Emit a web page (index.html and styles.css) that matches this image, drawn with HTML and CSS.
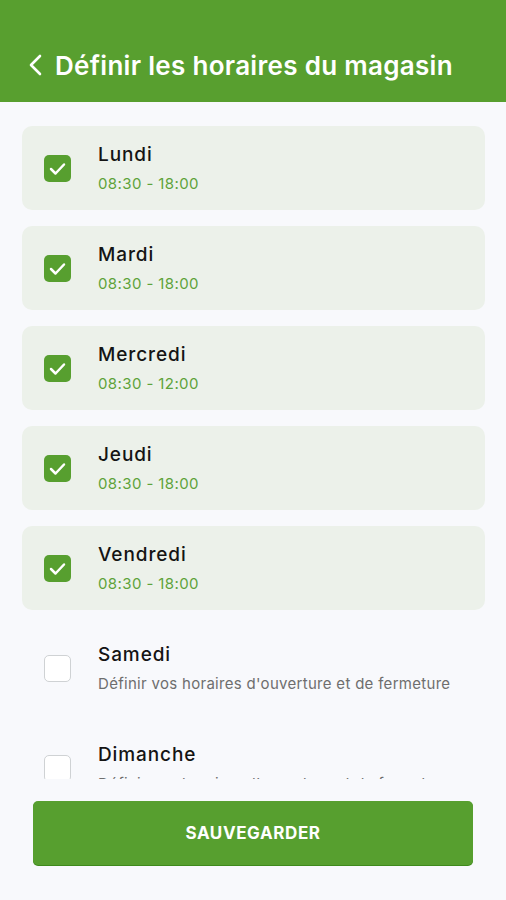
FILE: index.html
```html
<!DOCTYPE html>
<html>
	<head>
		<meta charset="UTF-8">
		<title>Définir les horaires du magasin</title>
		<link rel="stylesheet" href="styles.css">
	</head>
	<body>
		<div class="app">
			<div class="header">
				<svg class="back" width="16" height="22" viewBox="0 0 16 22">
					<polyline points="13,2 4,11 13,20" fill="none" stroke="#fff" stroke-width="2.6" stroke-linecap="round" stroke-linejoin="round"/>
				</svg>
				<h1 class="title">Définir les horaires du magasin</h1>
			</div>

			<div class="list">
				<div class="day on">
					<span class="check"><svg width="27" height="27" viewBox="0 0 27 27"><polyline points="7,14 11.5,18.5 20,9.5" fill="none" stroke="#fff" stroke-width="2.5" stroke-linecap="round" stroke-linejoin="round"/></svg></span>
					<div class="info">
						<div class="name">Lundi</div>
						<div class="hours">08:30 - 18:00</div>
					</div>
				</div>
				<div class="day on">
					<span class="check"><svg width="27" height="27" viewBox="0 0 27 27"><polyline points="7,14 11.5,18.5 20,9.5" fill="none" stroke="#fff" stroke-width="2.5" stroke-linecap="round" stroke-linejoin="round"/></svg></span>
					<div class="info">
						<div class="name">Mardi</div>
						<div class="hours">08:30 - 18:00</div>
					</div>
				</div>
				<div class="day on">
					<span class="check"><svg width="27" height="27" viewBox="0 0 27 27"><polyline points="7,14 11.5,18.5 20,9.5" fill="none" stroke="#fff" stroke-width="2.5" stroke-linecap="round" stroke-linejoin="round"/></svg></span>
					<div class="info">
						<div class="name">Mercredi</div>
						<div class="hours">08:30 - 12:00</div>
					</div>
				</div>
				<div class="day on">
					<span class="check"><svg width="27" height="27" viewBox="0 0 27 27"><polyline points="7,14 11.5,18.5 20,9.5" fill="none" stroke="#fff" stroke-width="2.5" stroke-linecap="round" stroke-linejoin="round"/></svg></span>
					<div class="info">
						<div class="name">Jeudi</div>
						<div class="hours">08:30 - 18:00</div>
					</div>
				</div>
				<div class="day on">
					<span class="check"><svg width="27" height="27" viewBox="0 0 27 27"><polyline points="7,14 11.5,18.5 20,9.5" fill="none" stroke="#fff" stroke-width="2.5" stroke-linecap="round" stroke-linejoin="round"/></svg></span>
					<div class="info">
						<div class="name">Vendredi</div>
						<div class="hours">08:30 - 18:00</div>
					</div>
				</div>
				<div class="day">
					<span class="check"></span>
					<div class="info">
						<div class="name">Samedi</div>
						<div class="hint">Définir vos horaires d'ouverture et de fermeture</div>
					</div>
				</div>
				<div class="day">
					<span class="check"></span>
					<div class="info">
						<div class="name">Dimanche</div>
						<div class="hint">Définir vos horaires d'ouverture et de fermeture</div>
					</div>
				</div>
			</div>

			<div class="footer">
				<button class="save">SAUVEGARDER</button>
			</div>
		</div>
	</body>
</html>
```

FILE: styles.css
```css
body {
	margin: 0;
	background: #f8f9fc;
	font-family: Inter, "Noto Sans", sans-serif;
}

.app {
	height: 900px;
	display: flex;
	flex-direction: column;
}

.header {
	height: 102px;
	flex: none;
	box-sizing: border-box;
	padding: 28px 0 0 27px;
	background: #589f2f;
	display: flex;
	align-items: center;
	gap: 12px;
}

.back {
	flex: none;
}

.title {
	margin: 0;
	color: #fff;
	font-size: 26px;
	font-weight: 600;
	letter-spacing: 0.3px;
}

.list {
	flex: 1;
	overflow: hidden;
	padding: 24px 21px 0 22px;
	display: flex;
	flex-direction: column;
	gap: 16px;
}

.day {
	flex: none;
	height: 84px;
	box-sizing: border-box;
	padding-left: 22px;
	border-radius: 10px;
	display: flex;
	align-items: center;
	gap: 27px;
}

.day.on {
	background: #ecf1ea;
}

.check {
	flex: none;
	width: 27px;
	height: 27px;
	box-sizing: border-box;
	border-radius: 5px;
	border: 1.5px solid #cfd2d4;
	background: #fff;
}

.day.on .check {
	border: none;
	background: #579f2f;
}

.check svg {
	display: block;
}

.name {
	color: #141414;
	font-size: 19px;
	font-weight: 500;
	letter-spacing: 0.9px;
	line-height: 24px;
}

.hours {
	margin-top: 7px;
	color: #5ea33a;
	font-size: 15px;
	letter-spacing: 0.4px;
	line-height: 20px;
}

.hint {
	margin-top: 7px;
	color: #6e6e6e;
	font-size: 15px;
	letter-spacing: 0.3px;
	line-height: 20px;
}

.footer {
	flex: none;
	padding: 22px 33px 35px;
}

.save {
	display: block;
	width: 100%;
	height: 64px;
	border: none;
	border-radius: 5px;
	background: #579f2f;
	box-shadow: 0 1px 0 #3f8a1c;
	color: #fff;
	font-family: Inter, "Noto Sans", sans-serif;
	font-size: 17px;
	font-weight: 700;
	letter-spacing: 0.6px;
}
```
